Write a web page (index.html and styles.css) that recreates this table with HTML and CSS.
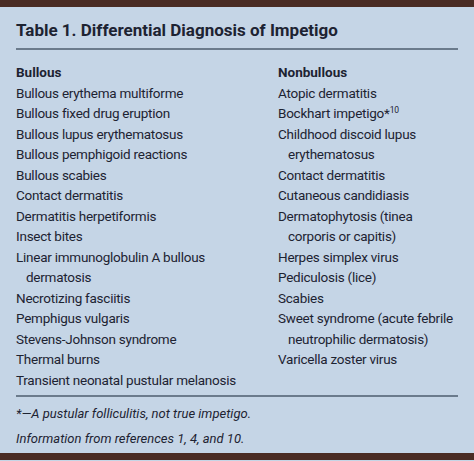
FILE: index.html
```html
<!DOCTYPE html>
<html>
<head>
<meta charset="utf-8">
<link rel="stylesheet" href="styles.css">
</head>
<body>
<div class="bar"></div>
<div class="panel">
  <h1 class="title">Table 1. Differential Diagnosis of Impetigo</h1>
  <div class="rule"></div>
  <div class="cols">
    <ul class="col">
      <li class="head">Bullous</li>
      <li>Bullous erythema multiforme</li>
      <li>Bullous fixed drug eruption</li>
      <li>Bullous lupus erythematosus</li>
      <li>Bullous pemphigoid reactions</li>
      <li>Bullous scabies</li>
      <li>Contact dermatitis</li>
      <li>Dermatitis herpetiformis</li>
      <li>Insect bites</li>
      <li>Linear immunoglobulin A bullous dermatosis</li>
      <li>Necrotizing fasciitis</li>
      <li>Pemphigus vulgaris</li>
      <li>Stevens-Johnson syndrome</li>
      <li>Thermal burns</li>
      <li>Transient neonatal pustular melanosis</li>
    </ul>
    <ul class="col">
      <li class="head">Nonbullous</li>
      <li>Atopic dermatitis</li>
      <li>Bockhart impetigo*<sup>10</sup></li>
      <li>Childhood discoid lupus erythematosus</li>
      <li>Contact dermatitis</li>
      <li>Cutaneous candidiasis</li>
      <li>Dermatophytosis (tinea corporis or capitis)</li>
      <li>Herpes simplex virus</li>
      <li>Pediculosis (lice)</li>
      <li>Scabies</li>
      <li>Sweet syndrome (acute febrile neutrophilic dermatosis)</li>
      <li>Varicella zoster virus</li>
    </ul>
  </div>
  <div class="rule rule-bottom"></div>
  <p class="note">*—A pustular folliculitis, not true impetigo.</p>
  <p class="note note-2">Information from references 1, 4, and 10.</p>
</div>
<div class="bar"></div>
</body>
</html>
```
FILE: styles.css
```css
html, body {
  margin: 0;
  padding: 0;
}
body {
  width: 474px;
  height: 461px;
  background: #c5d5e6;
  font-family: "Roboto", "Open Sans", sans-serif;
  color: #1d2332;
  overflow: hidden;
}
.bar {
  height: 7px;
  background: #4a2c24;
}
.panel {
  height: 446px;
  padding: 11px 16px 0 16px;
  box-sizing: border-box;
  background: #c5d5e6;
}
.title {
  margin: 0;
  font-size: 17px;
  line-height: 24px;
  font-weight: 700;
}
.rule {
  height: 2px;
  background: #6b7b8c;
  margin-top: 6px;
}
.cols {
  display: grid;
  grid-template-columns: 240px 176px;
  column-gap: 22px;
  margin-top: 12px;
  height: 329px;
}
.col {
  list-style: none;
  margin: 0;
  padding: 0;
  font-size: 13.5px;
  line-height: 20.5px;
  letter-spacing: -0.25px;
}
.col li {
  padding-left: 10px;
  text-indent: -10px;
}
.col .head {
  font-weight: 700;
  letter-spacing: 0;
}
.col sup {
  font-size: 8.5px;
  line-height: 0;
  vertical-align: 5px;
}
.rule-bottom {
  margin-top: 4px;
}
.note {
  margin: 8px 0 0;
  font-size: 13px;
  line-height: 18px;
  font-style: italic;
}
.note-2 {
  margin-top: 7px;
}
```
